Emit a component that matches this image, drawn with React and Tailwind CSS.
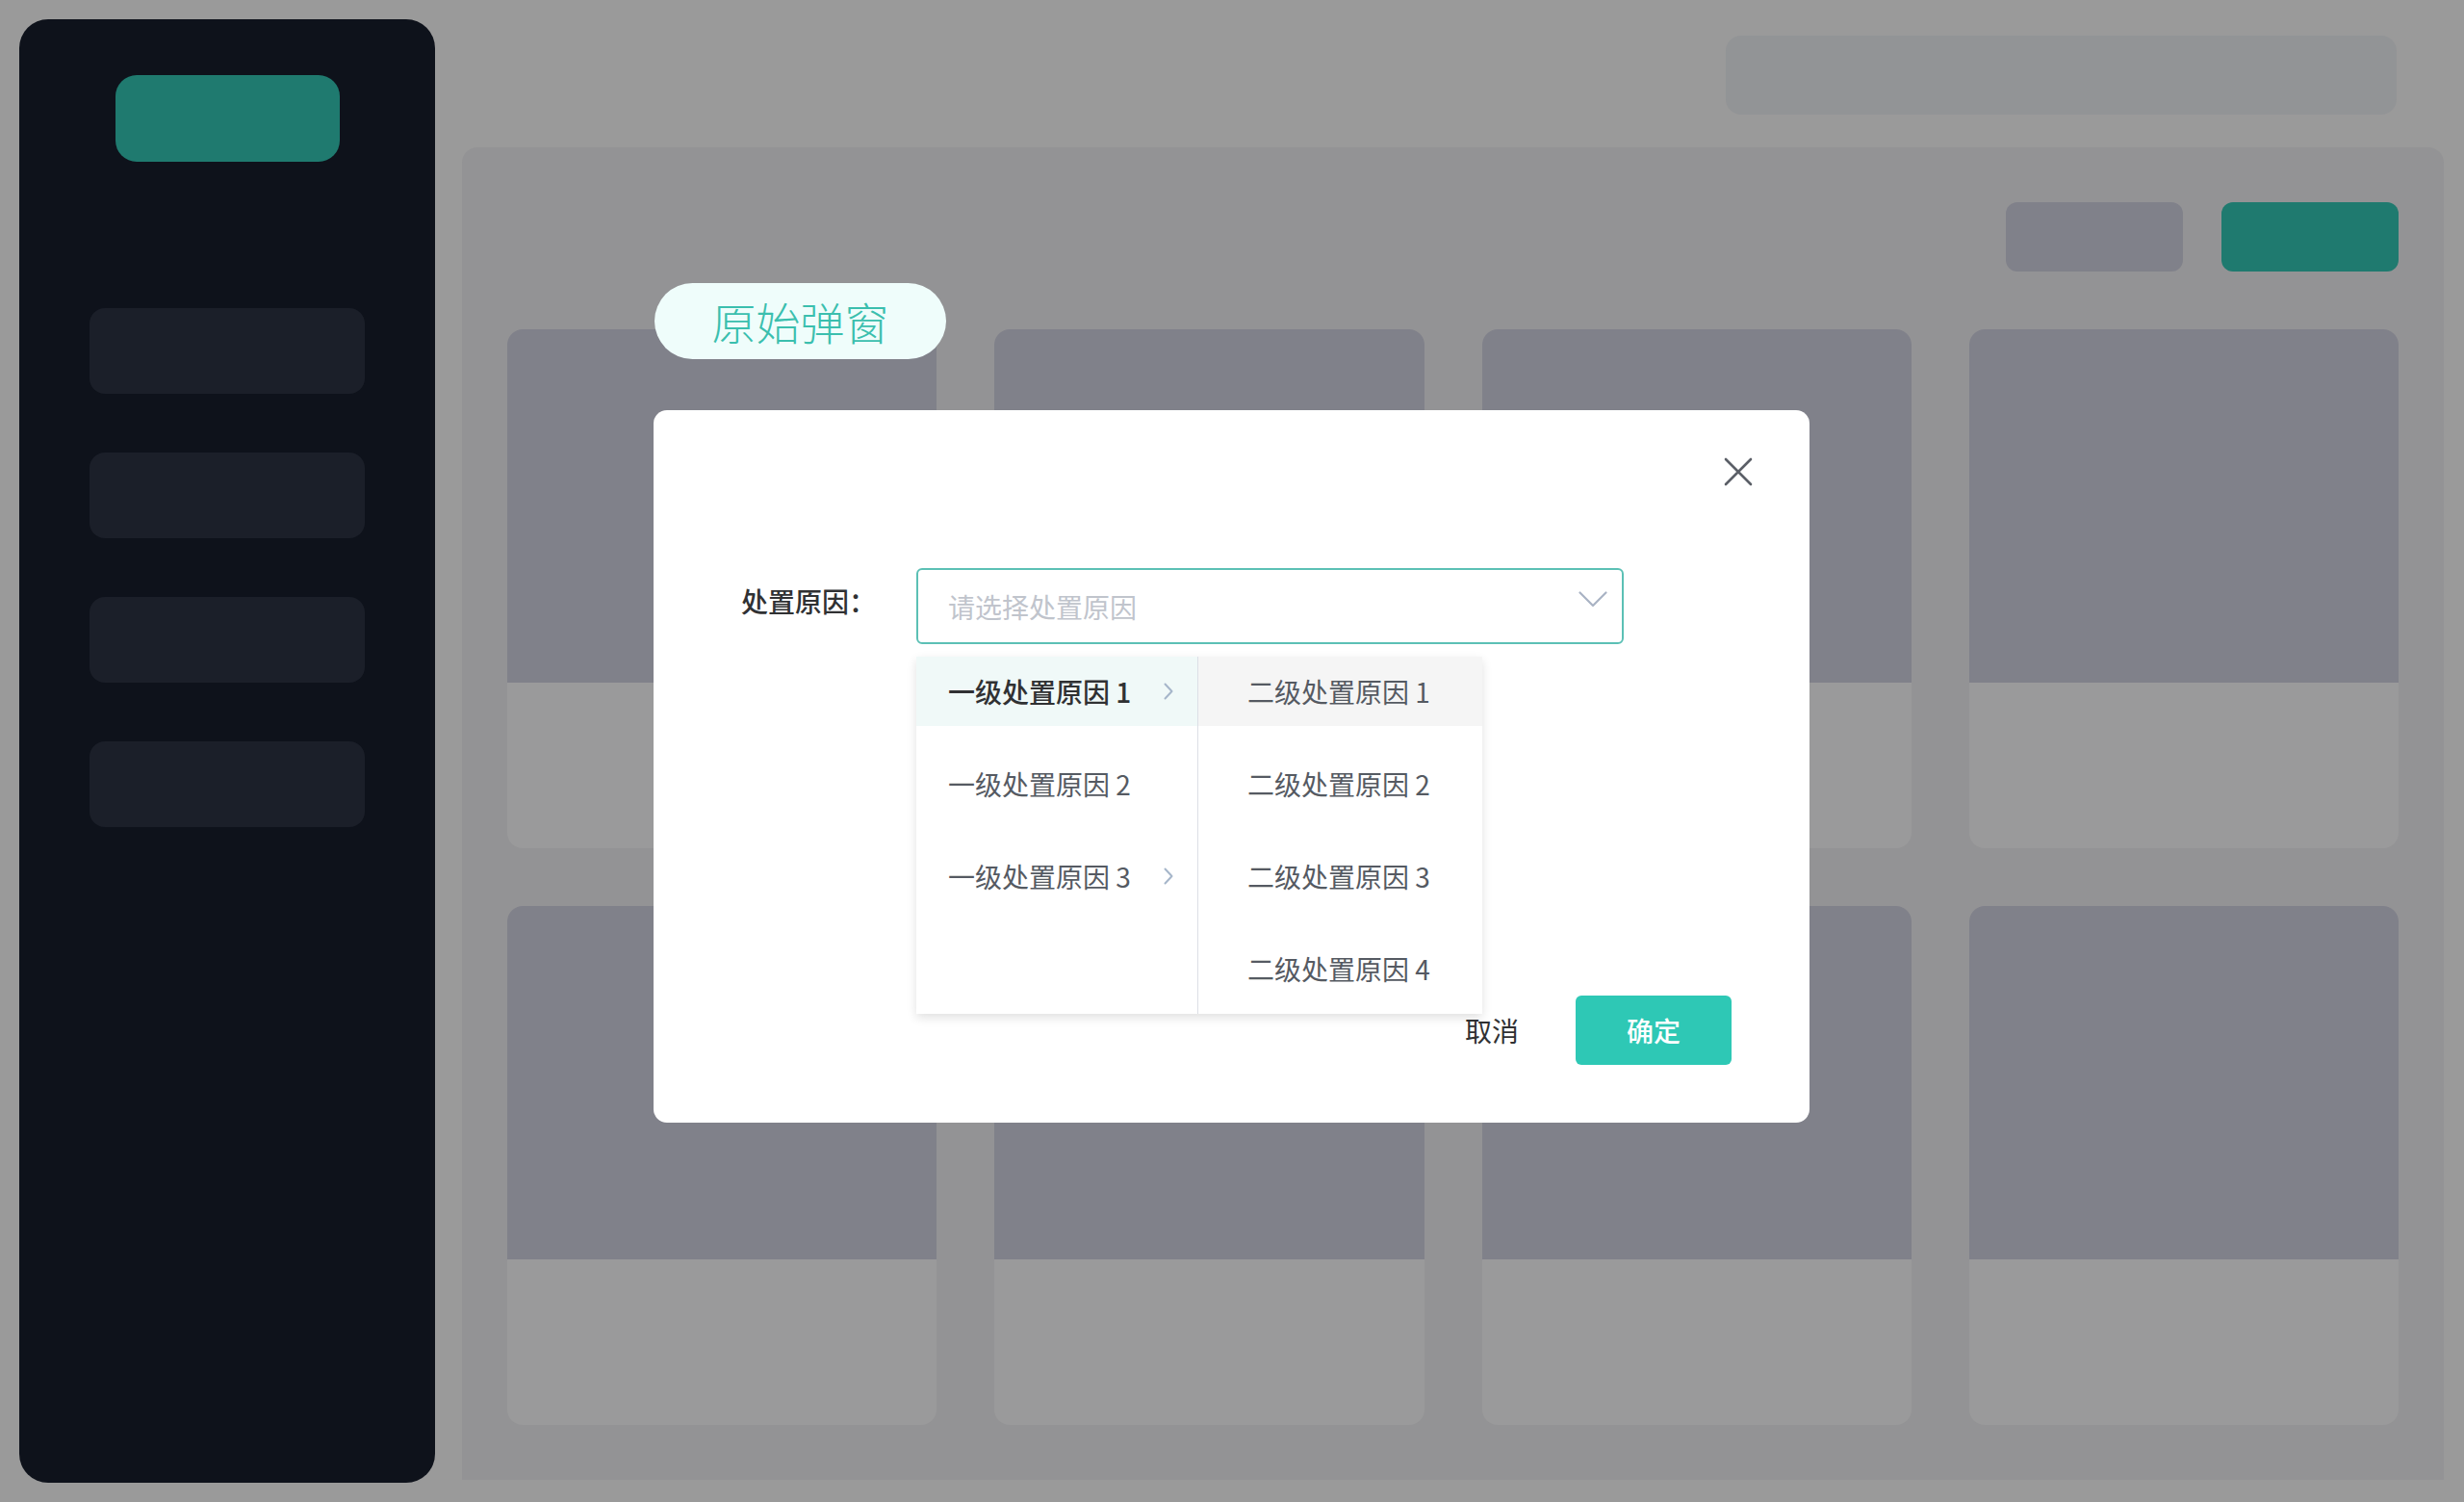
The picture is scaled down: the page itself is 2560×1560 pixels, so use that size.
const cjk = { fontFamily: '"Noto Sans CJK SC", "Noto Sans", sans-serif' }

const firstLevel = [
    { label: "一级处置原因 1", children: true, active: true },
    { label: "一级处置原因 2", children: false },
    { label: "一级处置原因 3", children: true },
]
const secondLevel = ["二级处置原因 1", "二级处置原因 2", "二级处置原因 3", "二级处置原因 4"]

const CloseIcon = () => (
    <svg width="30" height="30" viewBox="0 0 30 30" fill="none" stroke="#5b5f67" strokeWidth="2.6" strokeLinecap="round">
        <path d="M2 2 L28 28 M28 2 L2 28" />
    </svg>
)

const ArrowDown = () => (
    <svg width="30" height="17" viewBox="0 0 30 17" fill="none" stroke="#a9b3c4" strokeWidth="2.2" strokeLinecap="round" strokeLinejoin="round">
        <path d="M1.5 1.5 L15 15 L28.5 1.5" />
    </svg>
)

const ArrowRight = () => (
    <svg width="10" height="18" viewBox="0 0 10 18" fill="none" stroke="#a6b6ca" strokeWidth="2" strokeLinecap="round" strokeLinejoin="round">
        <path d="M1.5 1.5 L8.5 9 L1.5 16.5" />
    </svg>
)

const Sidebar = () => {
    return (
        <div className="ml-[20px] mt-[20px] w-[432px] h-[1520px] shrink-0 rounded-[30px] bg-[#0e121b] flex flex-col items-center pt-[58px]">
            <div className="w-[233px] h-[90px] rounded-[22px] bg-[#1f7a6f]" />
            <div className="mt-[152px] flex flex-col gap-[61px]">
                {[0, 1, 2, 3].map((i) => (
                    <div key={i} className="w-[286px] h-[89px] rounded-[16px] bg-[#1b1f29]" />
                ))}
            </div>
        </div>
    )
}

const Card = () => {
    return (
        <div className="h-[539px] rounded-[16px] overflow-hidden flex flex-col bg-[#9a9a9b]">
            <div className="h-[367px] bg-[#80818a]" />
        </div>
    )
}

const Dropdown = () => {
    return (
        <div className="absolute left-[273px] top-[256px] w-[588px] h-[371px] bg-white flex shadow-[0_4px_10px_rgba(0,0,0,0.12)]">
            <div className="w-[293px] border-r border-[#dcdfe6] flex flex-col gap-[24px]">
                {firstLevel.map((item) => (
                    <div
                        key={item.label}
                        className={`h-[72px] pl-[33px] pr-[25px] flex items-center justify-between text-[28px] ${item.active ? "bg-[#f0f9f8] text-[#303133] font-medium" : "text-[#555a62]"}`}
                    >
                        <span>{item.label}</span>
                        {item.children && <ArrowRight />}
                    </div>
                ))}
            </div>
            <div className="w-[295px] flex flex-col gap-[24px]">
                {secondLevel.map((label, i) => (
                    <div
                        key={label}
                        className={`h-[72px] pl-[51px] flex items-center text-[28px] text-[#555a62] ${i === 0 ? "bg-[#f5f5f5]" : ""}`}
                    >
                        {label}
                    </div>
                ))}
            </div>
        </div>
    )
}

const Modal = () => {
    return (
        <div className="absolute left-[679px] top-[426px] w-[1201px] h-[740px] bg-white rounded-[14px] flex flex-col" style={cjk}>
            <div className="flex justify-end pt-[49px] pr-[59px]">
                <CloseIcon />
            </div>
            <div className="mt-[85px] pl-[91px] flex items-center">
                <div className="w-[182px] text-[28px] text-[#303133] font-medium -mt-[12px]">处置原因：</div>
                <div className="w-[735px] h-[79px] rounded-[6px] border-2 border-[#5cc0b5] pl-[31px] pr-[15px] flex items-center justify-between">
                    <span className="text-[28px] text-[#c0c4cc]">请选择处置原因</span>
                    <div className="-mt-[14px]">
                        <ArrowDown />
                    </div>
                </div>
            </div>
            <div className="mt-[365px] pr-[81px] flex justify-end items-center gap-[59px]">
                <span className="text-[28px] text-[#303133]">取消</span>
                <div className="w-[162px] h-[72px] rounded-[6px] bg-[#2ec8b5] text-white text-[28px] font-medium flex items-center justify-center">确定</div>
            </div>
            <Dropdown />
        </div>
    )
}

const App = () => {
    return (
        <div className="relative w-[2560px] h-[1560px] bg-[#9a9a9a] flex items-start overflow-hidden">
            <Sidebar />
            <div className="ml-[28px] w-[2059px] flex flex-col">
                <div className="h-[153px] pt-[37px] pr-[49px] flex justify-end">
                    <div className="w-[697px] h-[82px] rounded-[16px] bg-[#929496]" />
                </div>
                <div className="h-[1384px] rounded-t-[16px] bg-[#939395] px-[47px] pt-[57px]">
                    <div className="flex justify-end gap-[40px]">
                        <div className="w-[184px] h-[72px] rounded-[12px] bg-[#80818a]" />
                        <div className="w-[184px] h-[72px] rounded-[12px] bg-[#1f7a6f]" />
                    </div>
                    <div className="mt-[60px] grid grid-cols-4 gap-[60px]">
                        {[0, 1, 2, 3, 4, 5, 6, 7].map((i) => (
                            <Card key={i} />
                        ))}
                    </div>
                </div>
            </div>
            <div
                className="absolute left-[680px] top-[294px] w-[303px] h-[79px] rounded-full bg-[#effdfb] flex items-center justify-center text-[46px] font-light text-[#3bbfae]"
                style={cjk}
            >
                原始弹窗
            </div>
            <Modal />
        </div>
    )
}

export default App
